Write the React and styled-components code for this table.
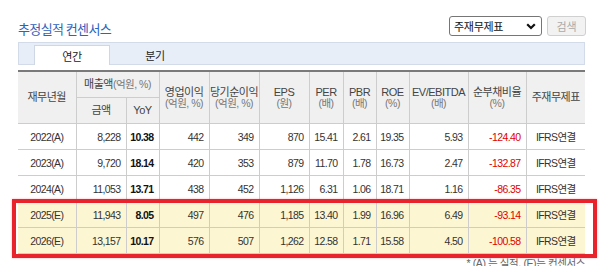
import styled, { createGlobalStyle } from "styled-components";

const GlobalStyle = createGlobalStyle`
  html, body {
    margin: 0;
    padding: 0;
    background: #fff;
  }
  body {
    font-family: "Liberation Sans", "Noto Sans CJK KR", sans-serif;
    color: #333;
    overflow: hidden;
  }
`;

const Page = styled.div`
  width: 567px;
  padding: 16px 14px 0 18px;
`;

const Top = styled.div`
  display: flex;
  justify-content: space-between;
  align-items: flex-start;
  height: 20px;
`;

const Title = styled.h2`
  margin: 0;
  padding-top: 5px;
  font-size: 13px;
  line-height: 16px;
  font-weight: normal;
  letter-spacing: -0.6px;
  color: #2f62be;
  font-family: "Noto Sans CJK KR", sans-serif;
`;

const Controls = styled.div`
  display: flex;
  gap: 5px;
  margin-right: -1px;
`;

const Select = styled.div`
  box-sizing: border-box;
  width: 93px;
  height: 20px;
  border: 1px solid #767676;
  border-radius: 3px;
  display: flex;
  align-items: center;
  justify-content: space-between;
  padding: 0 5px 0 4px;
  font-size: 11px;
  letter-spacing: -0.3px;
  color: #111;
  font-family: "Noto Sans CJK KR", sans-serif;
`;

const SearchButton = styled.div`
  box-sizing: border-box;
  width: 39px;
  height: 20px;
  border: 1px solid #d0d0d0;
  border-radius: 3px;
  background: #f2f2f2;
  color: #aaa;
  font-size: 11px;
  display: flex;
  align-items: center;
  justify-content: center;
  font-family: "Noto Sans CJK KR", sans-serif;
`;

const TabBar = styled.div`
  box-sizing: border-box;
  margin-top: 6px;
  height: 23px;
  background: #e8eef8;
  border: 1px solid #d3dbe8;
  display: flex;
  align-items: flex-end;
  padding-left: 15px;
  gap: 7px;
`;

const Tab = styled.div`
  box-sizing: border-box;
  width: 76px;
  height: ${(p) => (p.$active ? "20px" : "21px")};
  margin-bottom: -1px;
  background: ${(p) => (p.$active ? "#fff" : "transparent")};
  border: 1px solid ${(p) => (p.$active ? "#cfd7e4" : "transparent")};
  border-bottom: none;
  display: flex;
  align-items: center;
  justify-content: center;
  font-size: 11px;
  letter-spacing: -0.3px;
  color: #222;
  font-family: "Noto Sans CJK KR", sans-serif;
`;

const TableWrap = styled.div`
  position: relative;
  margin-top: 5px;
`;

const Table = styled.table`
  width: 567px;
  table-layout: fixed;
  border-collapse: collapse;
  border-top: 2px solid #7a7a7a;
`;

const Th = styled.th`
  height: 25px;
  padding: 0;
  background: #f0f0f0;
  border: 1px solid #cdcdcd;
  border-top: none;
  font-weight: normal;
  font-size: 11px;
  line-height: 11px;
  letter-spacing: -0.5px;
  color: #444;
  text-align: center;
  vertical-align: middle;
  white-space: nowrap;
  &:first-child {
    border-left: none;
  }
  &:last-child {
    border-right: none;
  }
`;

const Unit = styled.span`
  display: ${(p) => (p.$block ? "block" : "inline")};
  color: #777;
  font-size: 10.5px;
`;

const Row = styled.tr`
  background: ${(p) => (p.$estimate ? "#fdf6d2" : "#fff")};
`;

const Td = styled.td`
  height: 25px;
  padding: 0 ${(p) => (p.$center ? "0" : "5px")} 0 0;
  border: 1px solid #cdcdcd;
  font-size: 10.5px;
  letter-spacing: -0.6px;
  text-align: ${(p) => (p.$center ? "center" : "right")};
  color: ${(p) => (p.$negative ? "#e00000" : p.$strong ? "#111" : "#333")};
  font-weight: ${(p) => (p.$strong ? "bold" : "normal")};
  white-space: nowrap;
  &:first-child {
    border-left: none;
  }
  &:last-child {
    border-right: none;
  }
`;

const Highlight = styled.div`
  position: absolute;
  left: -6px;
  top: 129px;
  width: 585px;
  height: 59px;
  box-sizing: border-box;
  border: 4px solid #e8232b;
  box-shadow: 0 0 2px rgba(232, 35, 43, 0.35);
  pointer-events: none;
`;

const Note = styled.div`
  text-align: right;
  font-size: 10.5px;
  line-height: 12px;
  letter-spacing: -0.4px;
  color: #666;
  padding-top: 3px;
  font-family: "Liberation Sans", "Noto Sans CJK KR", sans-serif;
`;

const widths = [58, 50, 33, 50, 50, 50, 34, 33, 33, 59, 58, 59];

const rows = [
  ["2022(A)", "8,228", "10.38", "442", "349", "870", "15.41", "2.61", "19.35", "5.93", "-124.40"],
  ["2023(A)", "9,720", "18.14", "420", "353", "879", "11.70", "1.78", "16.73", "2.47", "-132.87"],
  ["2024(A)", "11,053", "13.71", "438", "452", "1,126", "6.31", "1.06", "18.71", "1.16", "-86.35"],
  ["2025(E)", "11,943", "8.05", "497", "476", "1,185", "13.40", "1.99", "16.96", "6.49", "-93.14"],
  ["2026(E)", "13,157", "10.17", "576", "507", "1,262", "12.58", "1.71", "15.58", "4.50", "-100.58"],
];

const twoLine = [
  ["영업이익", "(억원, %)"],
  ["당기순이익", "(억원, %)"],
  ["EPS", "(원)"],
  ["PER", "(배)"],
  ["PBR", "(배)"],
  ["ROE", "(%)"],
  ["EV/EBITDA", "(배)"],
  ["순부채비율", "(%)"],
];

function Chevron() {
  return (
    <svg width="10" height="7" viewBox="0 0 10 7">
      <path d="M1.2 1.2 L5 5 L8.8 1.2" fill="none" stroke="#111" strokeWidth="2.2" />
    </svg>
  );
}

export default function App() {
  return (
    <>
      <GlobalStyle />
      <Page>
        <Top>
          <Title>추정실적 컨센서스</Title>
          <Controls>
            <Select>
              주재무제표
              <Chevron />
            </Select>
            <SearchButton>검색</SearchButton>
          </Controls>
        </Top>
        <TabBar>
          <Tab $active>연간</Tab>
          <Tab>분기</Tab>
        </TabBar>
        <TableWrap>
          <Table>
            <colgroup>
              {widths.map((w, i) => (
                <col key={i} style={{ width: w }} />
              ))}
            </colgroup>
            <thead>
              <tr>
                <Th rowSpan={2}>재무년월</Th>
                <Th colSpan={2}>
                  매출액<Unit>(억원, %)</Unit>
                </Th>
                {twoLine.map(([label, unit]) => (
                  <Th key={label} rowSpan={2}>
                    {label}
                    <Unit $block>{unit}</Unit>
                  </Th>
                ))}
                <Th rowSpan={2}>주재무제표</Th>
              </tr>
              <tr>
                <Th>금액</Th>
                <Th>YoY</Th>
              </tr>
            </thead>
            <tbody>
              {rows.map((r) => (
                <Row key={r[0]} $estimate={r[0].includes("(E)")}>
                  <Td $center>{r[0]}</Td>
                  {r.slice(1).map((v, i) => (
                    <Td key={i} $strong={i === 1} $negative={v.startsWith("-")}>
                      {v}
                    </Td>
                  ))}
                  <Td $center>IFRS연결</Td>
                </Row>
              ))}
            </tbody>
          </Table>
          <Highlight />
        </TableWrap>
        <Note>* (A) 는 실적, (E)는 컨센서스</Note>
      </Page>
    </>
  );
}
